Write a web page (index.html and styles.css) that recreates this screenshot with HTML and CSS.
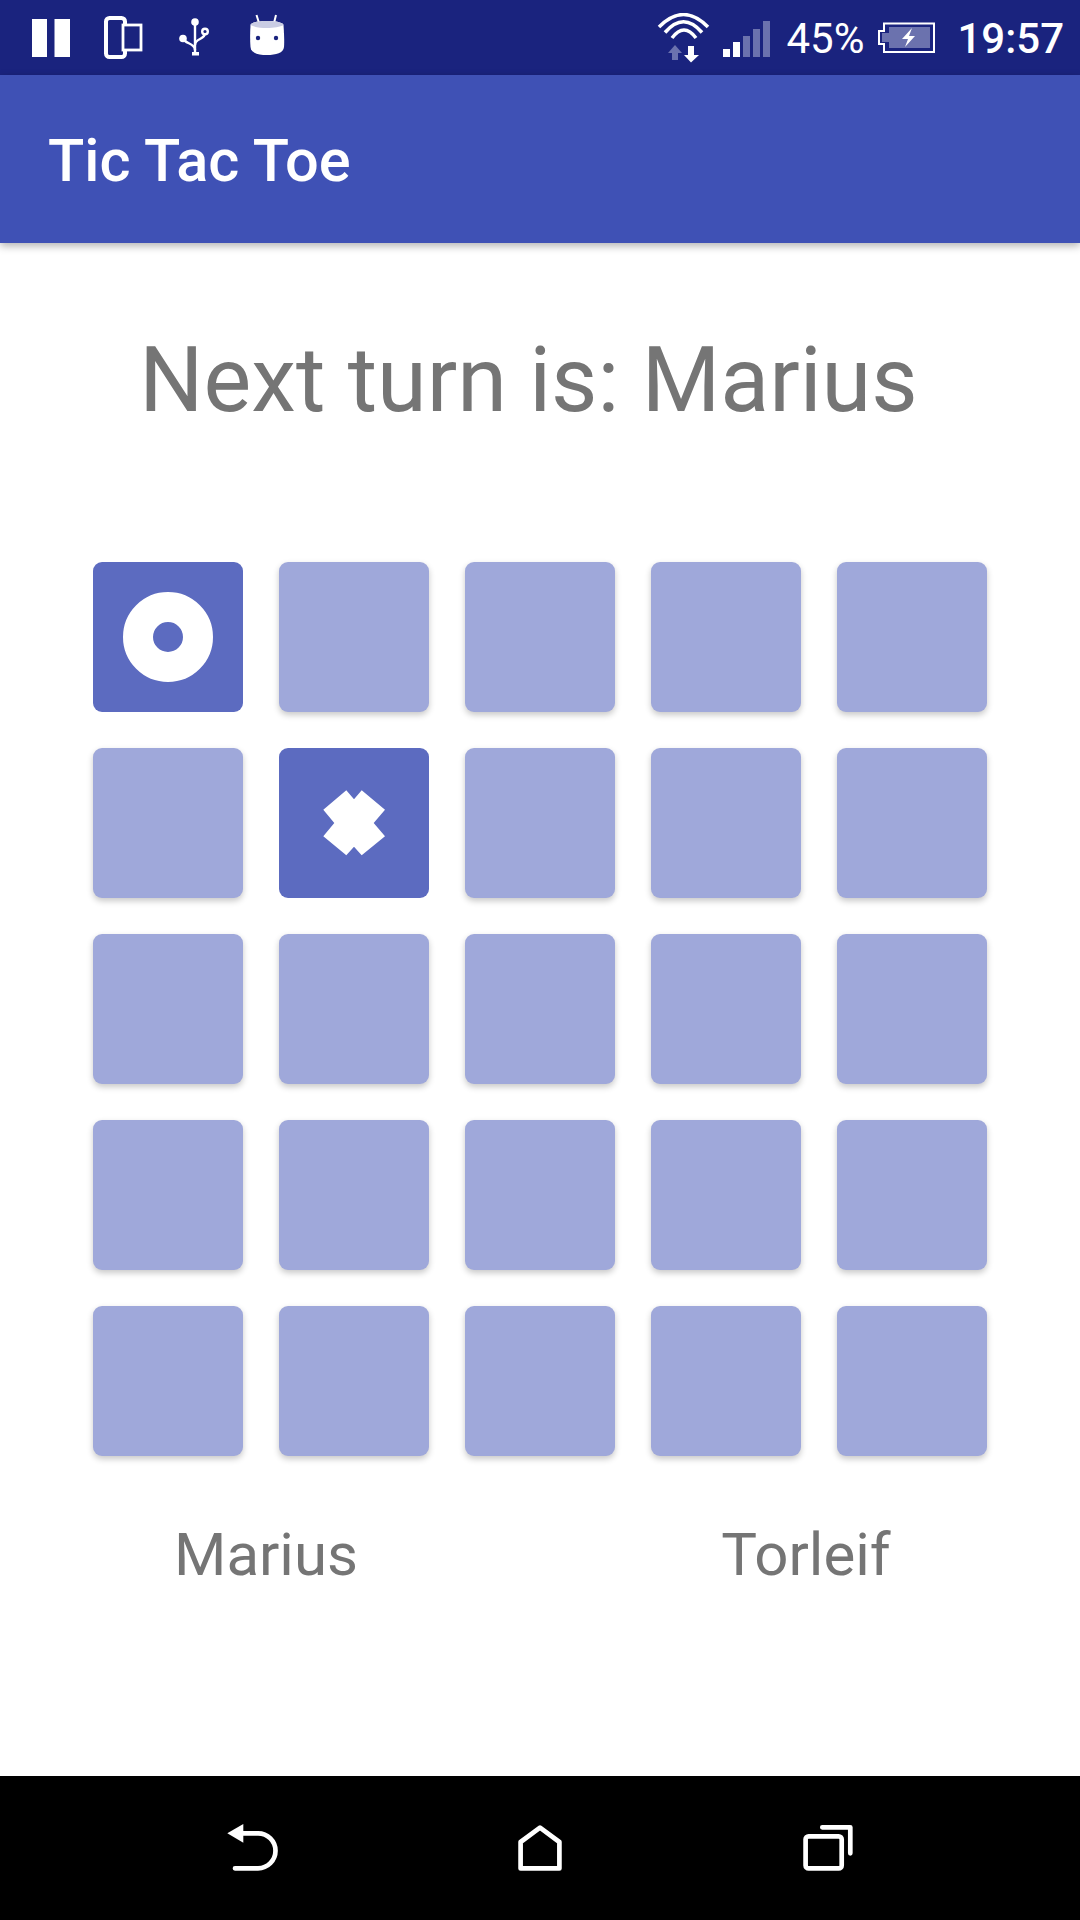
FILE: index.html
```html
<!doctype html>
<html>
	<head>
		<meta charset="utf-8">
		<title>Tic Tac Toe</title>
		<link rel="stylesheet" href="styles.css">
	</head>
	<body>
		<div id="status">
			<svg class="slot" viewBox="0 0 48 48"><rect x="5" y="6" width="15" height="38" fill="#fff"/><rect x="27.500" y="6" width="15.500" height="38" fill="#fff"/></svg>
			<svg class="slot" viewBox="0 0 48 48"><rect x="7" y="5" width="19" height="39" rx="3.500" fill="none" stroke="#fff" stroke-width="4"/><rect x="24" y="12" width="18" height="25" fill="#1a237e" stroke="#fff" stroke-width="2.800"/></svg>
			<svg class="slot" viewBox="0 0 48 48"><g fill="none" stroke="#fff" stroke-width="2.400"><path d="M24 9V41"/><path d="M12 25.500C14 31 24 30 24 37"/><path d="M34 20C34 27 24 25 24 32"/><circle cx="34" cy="18.500" r="2.800"/></g><circle cx="24" cy="9" r="3.800" fill="#fff"/><circle cx="12" cy="25.500" r="3.800" fill="#fff"/><rect x="21" y="39" width="7" height="3.500" fill="#fff"/></svg>
			<svg class="slot" viewBox="0 0 48 48"><path d="M13.500 2L16 10M33 2L31 10" stroke="#fff" stroke-width="2" fill="none"/><path d="M24 8C33 8 40 9.500 40.500 12C41 20 41.500 28 41 34C40.500 40 33 42 24 42C15 42 8 40 7.500 34C7 28 7 20 7.500 12C8 9.500 15 8 24 8Z" fill="#fff"/><path d="M24 8C33 8 40 9.500 40.500 12C34 16 14 16 7.500 12C8 9.500 15 8 24 8Z" fill="#c9cce3"/><circle cx="15" cy="25" r="2.200" fill="#1a237e"/><circle cx="33" cy="25" r="2.200" fill="#1a237e"/></svg>
			<svg class="wifi" viewBox="0 0 56 50"><g fill="none" stroke="#fff" stroke-width="3.500"><path d="M4 14Q28.500 -11 53 14"/><path d="M10 19.500Q28.500 -2 47 19.500"/><path d="M17 25Q29 9 41 25"/></g><path d="M20 32L13 40H17V47H23V40H27Z" fill="#6b72ae"/><path d="M33 33H39V42H44L36 49.500L29 42H33Z" fill="#fff"/></svg>
			<svg class="signal" viewBox="0 0 48 50"><rect y="36" width="7" height="8" fill="#fff"/><rect x="10" y="29" width="7" height="15" fill="#fff"/><rect x="20" y="23" width="7" height="21" fill="#6b72ae"/><rect x="30" y="16" width="7" height="28" fill="#6b72ae"/><rect x="40" y="8" width="7" height="36" fill="#6b72ae"/></svg>
			<span class="pct">45%</span>
			<svg class="battery" viewBox="0 0 58 50"><path d="M6 10.500H56V39H6V31H1V18H6Z" fill="none" stroke="#fff" stroke-width="2"/><rect x="11" y="14" width="41" height="21" fill="#6b72ae"/><rect x="4" y="20" width="7" height="9" fill="#6b72ae"/><path d="M34 15L24 26H30L27 34L37 23H31Z" fill="#fff"/></svg>
			<span class="time">19:57</span>
		</div>
		<div id="toolbar">Tic Tac Toe</div>
		<div id="main">
			<div class="turn">Next turn is: Marius</div>
			<div class="board">
				<div class="cell taken"><svg viewBox="0 0 150 150"><circle cx="75" cy="75" r="30" fill="none" stroke="#fff" stroke-width="30"/></svg></div>
				<div class="cell"></div>
				<div class="cell"></div>
				<div class="cell"></div>
				<div class="cell"></div>
				<div class="cell"></div>
				<div class="cell taken"><svg viewBox="0 0 150 150"><polygon fill="#fff" points="67.300,42.300 75,51.300 82.700,42.300 106,61.700 94.700,75 106,88.300 82.700,107.300 75,98.700 67.300,107.300 44.300,88.300 55.300,75 44.300,61.700"/></svg></div>
				<div class="cell"></div>
				<div class="cell"></div>
				<div class="cell"></div>
				<div class="cell"></div>
				<div class="cell"></div>
				<div class="cell"></div>
				<div class="cell"></div>
				<div class="cell"></div>
				<div class="cell"></div>
				<div class="cell"></div>
				<div class="cell"></div>
				<div class="cell"></div>
				<div class="cell"></div>
				<div class="cell"></div>
				<div class="cell"></div>
				<div class="cell"></div>
				<div class="cell"></div>
				<div class="cell"></div>
			</div>
			<div class="players">
				<span>Marius</span>
				<span>Torleif</span>
			</div>
		</div>
		<div id="nav">
			<svg viewBox="0 0 60 60"><path d="M5.300 15.300L21.300 6V24.700Z" fill="#fff"/><path d="M20 15.300H36A17.500 17.500 0 0 1 36 50.300H13" fill="none" stroke="#fff" stroke-width="4.700" stroke-linecap="round"/></svg>
			<svg viewBox="0 0 60 60"><path d="M10.600 50.400V24L30 9.700L49.400 24V50.400Z" fill="none" stroke="#fff" stroke-width="4.700" stroke-linejoin="round"/></svg>
			<svg viewBox="0 0 60 60"><rect x="7.600" y="18.300" width="36.100" height="32.100" rx="3" fill="none" stroke="#fff" stroke-width="4.700"/><path d="M24.300 9.300H52.300V35.300" fill="none" stroke="#fff" stroke-width="4.700" stroke-linecap="round" stroke-linejoin="round"/></svg>
		</div>
	</body>
</html>
```

FILE: styles.css
```css
html, body {
	margin: 0px;
	background: #fff;
	font-family: Roboto, sans-serif;
}
body {
	display: flex;
	flex-direction: column;
	width: 1080px;
	height: 1920px;
	overflow: hidden;
}
#status {
	display: flex;
	align-items: flex-start;
	box-sizing: border-box;
	height: 75px;
	padding: 13px 16px 0px 27px;
	background: #1a237e;
	color: #fff;
}
#status svg {
	display: block;
	flex: none;
}
.slot {
	width: 48px;
	height: 48px;
	margin-right: 24px;
}
.wifi {
	width: 56px;
	height: 50px;
	margin-left: auto;
}
.signal {
	width: 48px;
	height: 50px;
	margin-left: 12px;
}
.battery {
	width: 58px;
	height: 50px;
}
.pct, .time {
	font-size: 42px;
	line-height: 52px;
}
.pct {
	margin: 0px 14px 0px 15px;
}
.time {
	margin-left: 21px;
	font-weight: 500;
}
#toolbar {
	position: relative;
	box-sizing: border-box;
	height: 168px;
	padding: 2px 0px 0px 48px;
	background: #3f51b5;
	box-shadow: 0px 3px 8px rgba(0, 0, 0, 0.3);
	color: #fff;
	font-size: 59.500px;
	font-weight: 500;
	line-height: 168px;
}
#main {
	flex: 1;
	display: flex;
	flex-direction: column;
	align-items: center;
}
.turn {
	box-sizing: border-box;
	width: 100%;
	margin-top: 85px;
	padding-right: 23px;
	color: #757575;
	font-size: 90px;
	line-height: 106px;
	text-align: center;
}
.board {
	display: grid;
	grid-template-columns: repeat(5, 150px);
	grid-auto-rows: 150px;
	gap: 36px;
	margin-top: 128px;
}
.cell {
	border-radius: 9px;
	background: #9fa8da;
	box-shadow: 0px 3px 6px rgba(0, 0, 0, 0.22);
}
.cell svg {
	display: block;
	width: 150px;
	height: 150px;
}
.taken {
	background: #5c6bc0;
	box-shadow: none;
}
.players {
	display: grid;
	grid-template-columns: 532px 540px;
	gap: 4px;
	width: 100%;
	margin-top: 64px;
	color: #757575;
	font-size: 60px;
	line-height: 70px;
	text-align: center;
}
#nav {
	display: flex;
	gap: 228px;
	box-sizing: border-box;
	height: 144px;
	padding: 42px 0px 0px 222px;
	background: #000;
}
#nav svg {
	display: block;
	width: 60px;
	height: 60px;
}
```
